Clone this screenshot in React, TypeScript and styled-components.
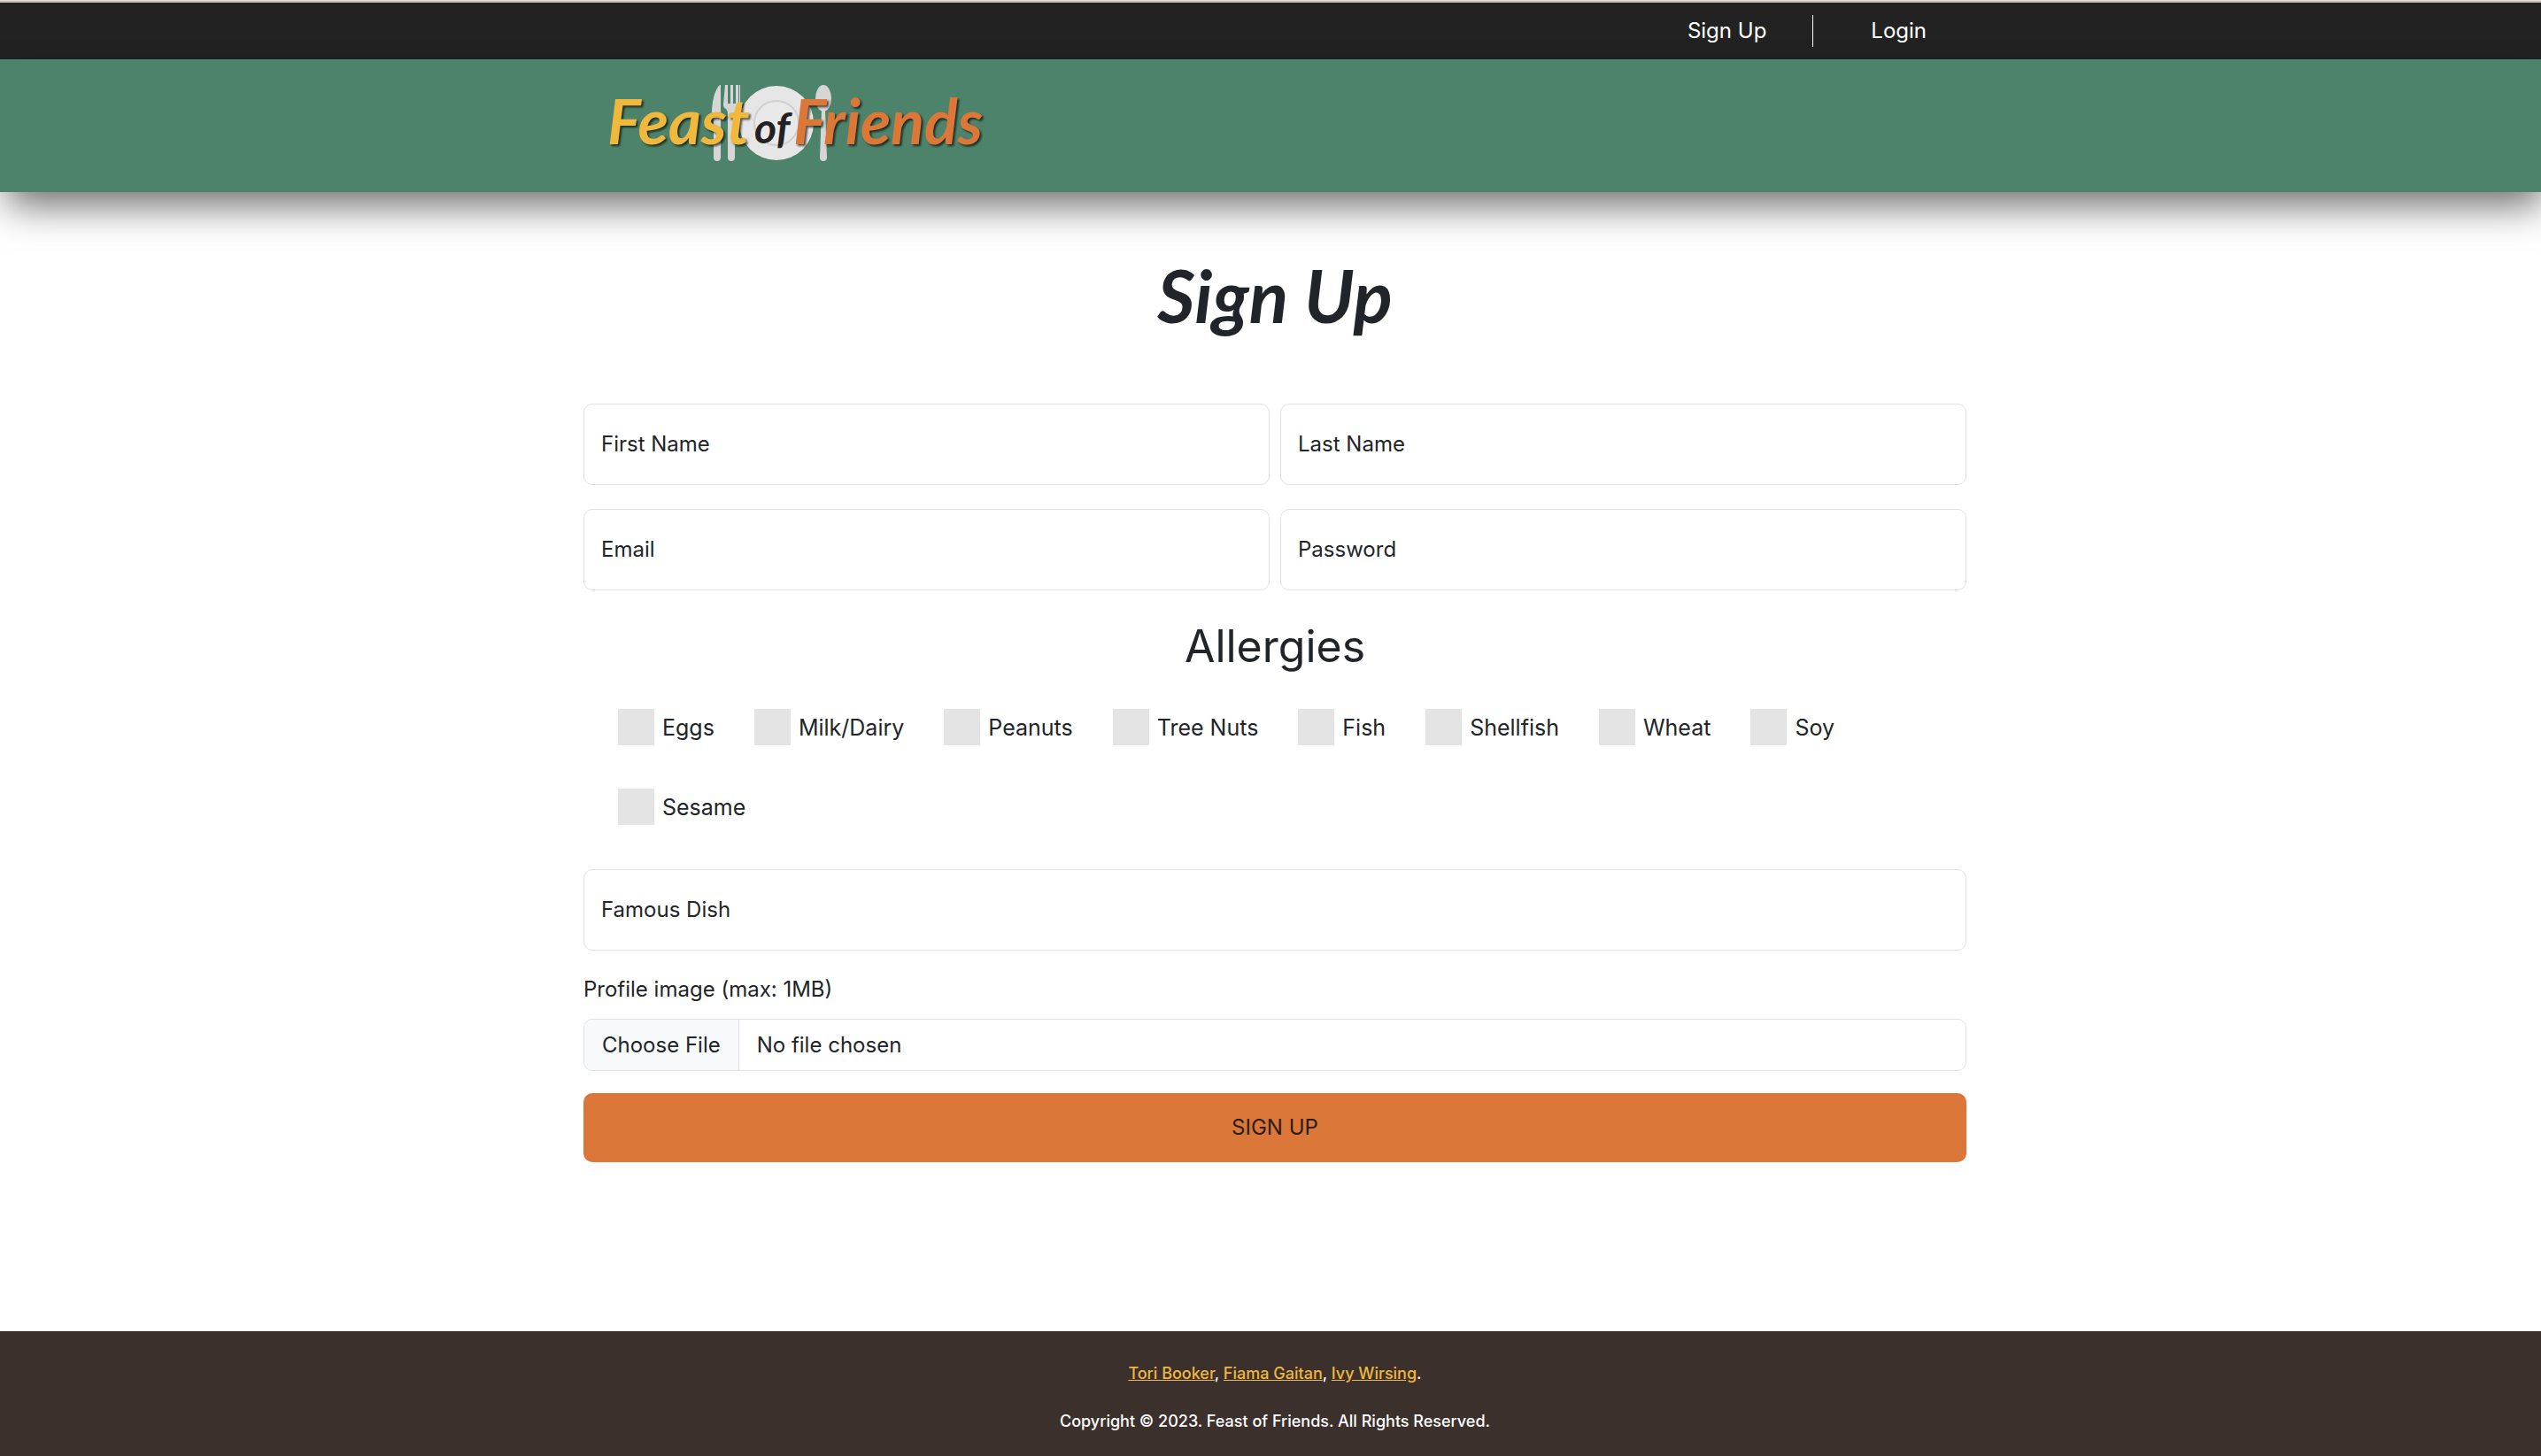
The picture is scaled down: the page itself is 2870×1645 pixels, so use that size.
import React from "react";
import styled, { createGlobalStyle } from "styled-components";

const GlobalStyle = createGlobalStyle`
  *, *::before, *::after { box-sizing: border-box; }
  body {
    margin: 0;
    overflow-x: hidden;
    background: #fff;
    color: #212529;
    font-family: Inter, "Liberation Sans", sans-serif;
    font-size: 24px;
    line-height: 36px;
  }
`;

/* The page runs slightly past the right edge, as under a hidden scrollbar. */
const Page = styled.div`
  display: flex;
  flex-direction: column;
  width: calc(100% + 10px);
  min-height: 100vh;
`;

const Container = styled.div`
  width: 100%;
  max-width: 1562px;
  margin: 0 auto;
`;

const Strip = styled.div`
  height: 3px;
  border-top: 1px solid #ece2da;
  background: #c4bab2;
`;

const TopBar = styled.div`
  background: #222;
`;

const Nav = styled.nav`
  display: flex;
  align-items: center;
  justify-content: flex-end;
  height: 64px;
  padding-right: 45px;
`;

const NavLink = styled.a<{ $divided?: boolean }>`
  color: #fff;
  text-decoration: none;
  ${(p) => p.$divided && "margin-right: 65px; padding-right: 52px; border-right: 1px solid #fff;"}
`;

const Header = styled.header`
  background: #4d836b;
  box-shadow: 0 22px 45px -8px rgba(0, 0, 0, 0.6);
`;

const Brand = styled(Container)`
  display: flex;
  align-items: center;
  height: 150px;
  padding-left: 21px;
`;

const LogoLink = styled.a`
  display: block;
`;

const LogoSvg = styled.svg`
  display: block;
  width: 440px;
  height: 100px;
`;

const Wordmark = styled.text`
  font-family: Lato, "Liberation Sans", sans-serif;
  font-style: italic;
  font-weight: 700;
  filter: drop-shadow(2px 2px 1px rgba(0, 0, 0, 0.65));
`;

const Conjunction = styled(Wordmark)`
  filter: none;
`;

const Main = styled.main`
  flex: 1;
  padding: 48px 0;
`;

const Title = styled.h1`
  margin: 0 0 55px;
  font-family: Lato, "Liberation Sans", sans-serif;
  font-style: italic;
  font-weight: 700;
  font-size: 82px;
  line-height: 136px;
  text-align: center;
`;

const FieldGrid = styled.div`
  display: grid;
  grid-template-columns: 1fr 1fr;
  gap: 27px 12px;
`;

const Field = styled.div`
  position: relative;
  height: 92px;
`;

const TextInput = styled.input`
  display: block;
  width: 100%;
  height: 100%;
  padding: 26px 20px 0;
  border: 1px solid #dee2e6;
  border-radius: 10px;
  background: #fff;
  color: inherit;
  font: inherit;
`;

/* Floating label: rests over the empty input and shrinks once it is filled. */
const FloatingLabel = styled.label`
  position: absolute;
  inset: 0;
  display: flex;
  align-items: center;
  padding: 0 20px;
  pointer-events: none;

  ${TextInput}:not(:placeholder-shown) + & {
    align-items: flex-start;
    font-size: 18px;
  }
`;

const Allergies = styled.fieldset`
  margin: 33px 0 50px;
  padding: 0;
  border: 0;
`;

const Legend = styled.legend`
  width: 100%;
  padding: 0;
  font-size: 50px;
  line-height: 60px;
  text-align: center;
`;

const Options = styled.div`
  display: flex;
  flex-wrap: wrap;
  gap: 49px 45px;
  padding: 41px 0 0 39px;
`;

const Option = styled.label`
  display: flex;
  align-items: center;
  gap: 9px;
  font-size: 25px;
`;

const Checkbox = styled.input`
  appearance: none;
  width: 41px;
  height: 41px;
  margin: 0;
  background: #e4e4e4;

  &:checked {
    background: #db7738;
  }
`;

const FileLabel = styled.label`
  display: block;
  margin: 26px 0 15px;
`;

const FileInput = styled.input`
  display: block;
  width: 100%;
  height: 59px;
  border: 1px solid #dee2e6;
  border-radius: 10px;
  overflow: hidden;
  color: inherit;
  font: inherit;
  line-height: 57px;

  &::file-selector-button {
    height: 57px;
    margin: 0 20px 0 0;
    padding: 0 20px;
    border: 0;
    border-right: 1px solid #dee2e6;
    background: #f8f9fa;
    color: inherit;
    font: inherit;
  }
`;

const Submit = styled.button`
  display: block;
  width: 100%;
  height: 78px;
  margin-top: 25px;
  border: 0;
  border-radius: 10px;
  background: #db7738;
  color: #2a1e14;
  font: inherit;
  text-transform: uppercase;
`;

const Footer = styled.footer`
  display: flex;
  flex-direction: column;
  gap: 27px;
  padding: 34px 0 26px;
  background: #3b302c;
  color: #fff;
  font-size: 18px;
  font-weight: 500;
  line-height: 27px;
  text-align: center;
`;

const FooterLine = styled.p`
  margin: 0;
`;

const AuthorLink = styled.a`
  color: #eeb73f;
`;

const ALLERGENS = ["Eggs", "Milk/Dairy", "Peanuts", "Tree Nuts", "Fish", "Shellfish", "Wheat", "Soy", "Sesame"];

function Logo() {
  return (
    <LogoSvg viewBox="0 0 440 100" role="img" aria-label="Feast of Friends">
      <g fill="#d6d6d6">
        <path d="M133 4 C127 9 124 24 124 35 L126 39 V86 a4 4 0 0 0 8 0 V4 Z" />
        <path d="M139 4 h3 v21 h3 V4 h3 v21 h3 V4 h3 v21 h2 V4 h-1 V26 q0 4 -3 5 q-2 2 -2 6 V86 a4 4 0 0 1 -8 0 V37 q0 -4 -2 -6 q-3 -1 -3 -5 Z" />
        <ellipse cx="250" cy="19" rx="9" ry="15" />
        <path d="M248 32 h4 l2 54 a4 4 0 0 1 -8 0 Z" />
      </g>
      <circle cx="197" cy="47" r="42" fill="#e6e6e6" />
      <circle cx="197" cy="47" r="25" fill="#e9e9e9" stroke="#d0d0d0" strokeWidth="2" />
      <Wordmark x="6" y="71" fontSize="71" fill="#f0b93c">Feast</Wordmark>
      <Conjunction x="172" y="70" fontSize="48" fill="#222">of</Conjunction>
      <Wordmark x="216" y="71" fontSize="70" fill="#dc7737">Friends</Wordmark>
    </LogoSvg>
  );
}

function FloatingField({ id, label, type = "text" }: { id: string; label: string; type?: string }) {
  return (
    <Field>
      <TextInput id={id} type={type} placeholder=" " />
      <FloatingLabel htmlFor={id}>{label}</FloatingLabel>
    </Field>
  );
}

export default function App() {
  return (
    <>
      <GlobalStyle />
      <Page>
        <Strip />
        <TopBar>
          <Container>
            <Nav>
              <NavLink href="#signup" $divided>Sign Up</NavLink>
              <NavLink href="#login">Login</NavLink>
            </Nav>
          </Container>
        </TopBar>
        <Header>
          <Brand>
            <LogoLink href="#home"><Logo /></LogoLink>
          </Brand>
        </Header>
        <Main>
          <Container>
            <Title>Sign Up</Title>
            <form onSubmit={(e) => e.preventDefault()}>
              <FieldGrid>
                <FloatingField id="first-name" label="First Name" />
                <FloatingField id="last-name" label="Last Name" />
                <FloatingField id="email" label="Email" type="email" />
                <FloatingField id="password" label="Password" type="password" />
              </FieldGrid>
              <Allergies>
                <Legend>Allergies</Legend>
                <Options>
                  {ALLERGENS.map((name) => (
                    <Option key={name}>
                      <Checkbox type="checkbox" name="allergies" value={name} />
                      {name}
                    </Option>
                  ))}
                </Options>
              </Allergies>
              <FloatingField id="famous-dish" label="Famous Dish" />
              <FileLabel htmlFor="profile-image">Profile image (max: 1MB)</FileLabel>
              <FileInput id="profile-image" type="file" accept="image/*" />
              <Submit type="submit">Sign Up</Submit>
            </form>
          </Container>
        </Main>
        <Footer>
          <FooterLine>
            <AuthorLink href="#tori">Tori Booker</AuthorLink>, <AuthorLink href="#fiama">Fiama Gaitan</AuthorLink>,{" "}
            <AuthorLink href="#ivy">Ivy Wirsing</AuthorLink>.
          </FooterLine>
          <FooterLine>Copyright © 2023. Feast of Friends. All Rights Reserved.</FooterLine>
        </Footer>
      </Page>
    </>
  );
}
